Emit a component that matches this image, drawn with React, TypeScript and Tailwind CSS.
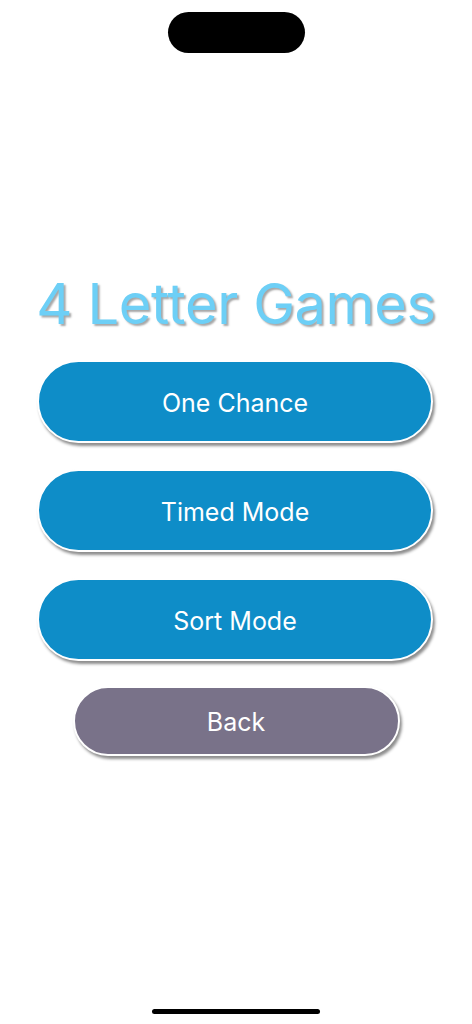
const modes = ["One Chance", "Timed Mode", "Sort Mode"];

export default function App() {
  return (
    <div
      className="flex min-h-[1024px] w-full flex-col items-center bg-white"
      style={{ fontFamily: "Inter, 'Noto Sans', sans-serif" }}
    >
      {/* dynamic island */}
      <div className="mt-[12px] h-[41px] w-[137px] rounded-full bg-black" />

      <div className="mt-[221px] flex w-full flex-col items-center gap-[26px]">
        <h1 className="h-[60px] text-[56px] leading-[60px] font-normal tracking-[-0.4px] text-[#6dcff6] [text-shadow:2px_2px_2px_rgba(0,0,0,0.35)]">
          4 Letter Games
        </h1>
        {modes.map((m) => (
          <button
            key={m}
            className="ml-[-2px] flex h-[83px] w-[396px] items-center justify-center rounded-full border-2 border-white bg-[#0e8dc8] pt-[4px] text-[25px] text-white shadow-[2px_3px_3px_rgba(0,0,0,0.45)]"
          >
            {m}
          </button>
        ))}
        <button className="-mt-[1px] flex h-[70px] w-[327px] items-center justify-center rounded-full border-2 border-white bg-[#797289] pt-[3px] text-[25px] text-white shadow-[2px_3px_3px_rgba(0,0,0,0.45)]">
          Back
        </button>
      </div>

      <div className="flex-1" />
      {/* home indicator */}
      <div className="mb-[10px] h-[5px] w-[168px] rounded-full bg-black" />
    </div>
  );
}
